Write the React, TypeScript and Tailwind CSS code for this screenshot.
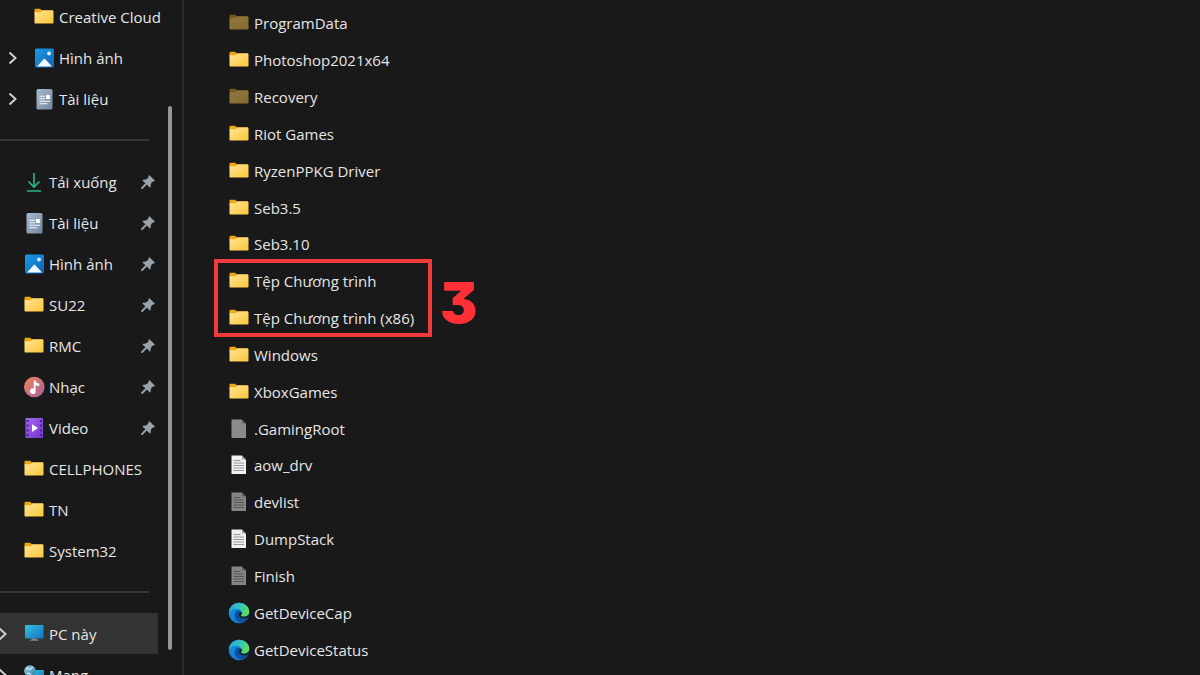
import type { ReactNode } from "react";
import clsx from "clsx";

type IconName =
  | "folder"
  | "hidden-folder"
  | "pictures"
  | "documents"
  | "downloads"
  | "music"
  | "video"
  | "pc"
  | "network"
  | "file"
  | "text"
  | "hidden-text"
  | "edge";

type Entry = { name: string; icon: IconName };
type NavEntry = Entry & { expandable?: boolean; pinned?: boolean; active?: boolean };

const CLOUD: NavEntry[] = [
  { name: "Creative Cloud", icon: "folder" },
  { name: "Hình ảnh", icon: "pictures", expandable: true },
  { name: "Tài liệu", icon: "documents", expandable: true },
];

const QUICK_ACCESS: NavEntry[] = [
  { name: "Tải xuống", icon: "downloads", pinned: true },
  { name: "Tài liệu", icon: "documents", pinned: true },
  { name: "Hình ảnh", icon: "pictures", pinned: true },
  { name: "SU22", icon: "folder", pinned: true },
  { name: "RMC", icon: "folder", pinned: true },
  { name: "Nhạc", icon: "music", pinned: true },
  { name: "Video", icon: "video", pinned: true },
  { name: "CELLPHONES", icon: "folder" },
  { name: "TN", icon: "folder" },
  { name: "System32", icon: "folder" },
];

const DEVICES: NavEntry[] = [
  { name: "PC này", icon: "pc", expandable: true, active: true },
  { name: "Mạng", icon: "network", expandable: true },
];

const BEFORE: Entry[] = [
  { name: "ProgramData", icon: "hidden-folder" },
  { name: "Photoshop2021x64", icon: "folder" },
  { name: "Recovery", icon: "hidden-folder" },
  { name: "Riot Games", icon: "folder" },
  { name: "RyzenPPKG Driver", icon: "folder" },
  { name: "Seb3.5", icon: "folder" },
  { name: "Seb3.10", icon: "folder" },
];

const MARKED: Entry[] = [
  { name: "Tệp Chương trình", icon: "folder" },
  { name: "Tệp Chương trình (x86)", icon: "folder" },
];

const AFTER: Entry[] = [
  { name: "Windows", icon: "folder" },
  { name: "XboxGames", icon: "folder" },
  { name: ".GamingRoot", icon: "file" },
  { name: "aow_drv", icon: "text" },
  { name: "devlist", icon: "hidden-text" },
  { name: "DumpStack", icon: "text" },
  { name: "Finish", icon: "hidden-text" },
  { name: "GetDeviceCap", icon: "edge" },
  { name: "GetDeviceStatus", icon: "edge" },
];

function Page({ fill, line }: { fill: string; line?: string }) {
  return (
    <>
      <path d="M2.500 .5h10.500l4 4v14.500H2.500z" fill={fill} />
      <path d="M13 .5v4h4z" fill="#1a1a1a" fillOpacity="0.35" />
      {line && (
        <path d="M4.500 5.500h7M4.500 8h10.500M4.500 10.500h10.500M4.500 13h10.500M4.500 15.500h10.500" stroke={line} strokeWidth="1" />
      )}
    </>
  );
}

function Folder({ tab, fill }: { tab: string; fill: string }) {
  return (
    <>
      <path d="M.5 3c0-.7.4-1.200 1.100-1.200h4.600l1.500 1.400H19v3H.5z" fill={tab} />
      <path
        d="M.5 5.200h6.200l1.600-1.700h10.400c.5 0 .8.3.8.8v11.200c0 .6-.4 1-1 1h-17c-.6 0-1-.4-1-1z"
        fill={fill}
      />
    </>
  );
}

const DRAWINGS: Record<IconName, ReactNode> = {
  folder: <Folder tab="#eaa716" fill="url(#folder)" />,
  "hidden-folder": <Folder tab="#7a5b1a" fill="url(#folder-dim)" />,
  pictures: (
    <>
      <rect x="1" y="0.5" width="19" height="19" rx="1.5" fill="url(#sky)" />
      <path d="M3 18.500l6.600-7.300c.5-.6 1.200-.6 1.700 0L18 18.500z" fill="#f4faff" />
      <circle cx="15" cy="5.500" r="1.900" fill="#d9f1ff" />
    </>
  ),
  documents: (
    <>
      <rect x="2.500" y="0" width="16" height="20.500" rx="1.500" fill="url(#paper)" />
      <path d="M5.500 7.200H11M5.500 9.700H11M5.500 12.200h10.500M5.500 14.700h8" stroke="#f3f7fb" strokeWidth="1.100" />
      <rect x="12" y="6" width="3.800" height="4" fill="#fff" />
    </>
  ),
  downloads: (
    <path d="M10 1v14M4.500 9.500L10 15l5.500-5.500M3 19h14" fill="none" stroke="#27b78c" strokeWidth="1.600" />
  ),
  music: (
    <>
      <circle cx="10.300" cy="10" r="10.300" fill="url(#music)" />
      <path d="M9.800 3.500h1.800c.2 2 1.600 2.800 3.600 3.300v2.400c-1.500-.1-2.600-.5-3.600-1.200v6.200a2.800 2.800 0 1 1-1.800-2.600z" fill="#fff" />
    </>
  ),
  video: (
    <>
      <rect x="1.500" y="0" width="17.500" height="20" rx="1.200" fill="url(#video)" />
      <path d="M3.600 2v17M16.900 2v17" stroke="#4b2391" strokeWidth="2" strokeDasharray="2.200 2.400" />
      <path d="M8 6.200l6 3.900-6 3.900z" fill="#fff" />
    </>
  ),
  pc: (
    <>
      <rect x="1" y="1" width="18.500" height="13.500" rx="1" fill="url(#screen)" />
      <path d="M8 14.500h4.500v1.100h2v1.200H6v-1.200h2z" fill="#7d8a94" />
    </>
  ),
  network: (
    <>
      <rect x="5" y="5" width="15" height="12" rx="1" fill="url(#screen)" />
      <circle cx="6" cy="6" r="5.800" fill="url(#globe)" />
      <path d="M2 3.500c2-.5 2.500 1.200 4 1s1.500-2.500 3-2M3 8.500c1.500-1 3.500 0 4 2" stroke="#d4eef8" strokeWidth="1.200" fill="none" />
    </>
  ),
  file: <Page fill="#8b8b8b" />,
  text: <Page fill="#f1f1f1" line="#999" />,
  "hidden-text": <Page fill="#858585" line="#565656" />,
  edge: (
    <>
      <circle cx="10" cy="10" r="10.300" fill="url(#edge-blue)" />
      <path
        d="M-.2 9C.6 3.600 5-.3 10-.3c5.800 0 10.300 4.300 10.300 8.800 0 3.400-2.600 5.300-5.400 5.300-1.800 0-3-.6-3-1.200 0-.5.900-.9.900-2.500 0-2.300-2.400-4.300-5.600-4.300C4 5.800 1.500 7.200-.2 9z"
        fill="url(#edge-green)"
      />
      <path
        d="M7.600 8.300c-1.700 1.300-2.200 3.300-1.700 5.400.7 3 3.600 5.400 7 5.800 2.700-1 4.500-2.300 5.900-4.400.3-.5-.1-.7-.5-.5-3.500 1.500-8.200.4-8.500-3-.1-1.400.6-2.400 1.800-3.100-1.300-1-2.900-.9-4-.2z"
        fill="#0d4f9e"
      />
      <path
        d="M12.900 10.100c0 1.600-.9 2-.9 2.500 0 .6 1.200 1.200 3 1.200 2 0 3.800-.9 4.700-2.500l.8 1.500-1.900 1.900c-3.500 1.900-8.500.6-8.800-3-.1-1.400.7-2.300 1.400-2.700.9-.4 1.700.2 1.700 1.100z"
        fill="#16202a"
      />
    </>
  ),
};

function Gradient({ id, from, to }: { id: string; from: string; to: string }) {
  return (
    <linearGradient id={id} x1="0" y1="0" x2="1" y2="1">
      <stop offset="0" stopColor={from} />
      <stop offset="1" stopColor={to} />
    </linearGradient>
  );
}

function Gradients() {
  return (
    <svg className="absolute h-0 w-0" aria-hidden="true">
      <defs>
        <Gradient id="folder" from="#ffe596" to="#fcc638" />
        <Gradient id="folder-dim" from="#8e7a45" to="#86692a" />
        <Gradient id="sky" from="#1d9ae6" to="#0c62b8" />
        <Gradient id="paper" from="#a9bccd" to="#71869f" />
        <Gradient id="music" from="#f0845a" to="#a8609f" />
        <Gradient id="video" from="#a566ee" to="#7438cf" />
        <Gradient id="screen" from="#35c3e4" to="#1272bd" />
        <Gradient id="globe" from="#9bd8ef" to="#24759c" />
        <Gradient id="edge-blue" from="#1597df" to="#0f6cc7" />
        <linearGradient id="edge-green" x1="0" y1="0.3" x2="1" y2="0.6">
          <stop offset="0" stopColor="#27a9e0" />
          <stop offset="0.55" stopColor="#35c8b4" />
          <stop offset="1" stopColor="#66df55" />
        </linearGradient>
      </defs>
    </svg>
  );
}

function Icon({ name }: { name: IconName }) {
  return (
    <svg viewBox="0 0 20 20" className="h-5 w-5 shrink-0 overflow-visible" aria-hidden="true">
      {DRAWINGS[name]}
    </svg>
  );
}

function Pin() {
  return (
    <svg viewBox="0 0 14 14" className="h-3.5 w-3.5 shrink-0" aria-hidden="true">
      <path
        d="M8.700.4l4.900 4.800c.4.4.2.9-.3 1L11 6.900 9.800 9.300l-.2 2.400c0 .7-.7.9-1.100.5L5.900 9.600 1.500 13.900H.2v-1.300l4.200-4.300L1.900 5.900c-.5-.5-.3-1.200.5-1.200l2.400-.3L7.100 3l.6-2.300c.1-.5.600-.7 1-.3z"
        fill="#98a2ab"
      />
    </svg>
  );
}

function NavRow({ entry, nested }: { entry: NavEntry; nested?: boolean }) {
  return (
    <li className={clsx("flex h-[41px] items-center", entry.active && "bg-[#333333]")}>
      <div className={clsx("flex h-full shrink-0 items-center", nested ? "w-[34px] pl-2" : "w-6")}>
        {entry.expandable && (
          <button aria-label={`Mở rộng ${entry.name}`} className={nested ? "" : "-ml-0.5"}>
            <svg viewBox="0 0 9 14" className="h-3.5 w-[9px]" aria-hidden="true">
              <path d="M1.500 1.500L7.500 7l-6 5.500" fill="none" stroke="#d0d0d0" strokeWidth="2" />
            </svg>
          </button>
        )}
      </div>
      <button className="flex h-full min-w-0 flex-1 items-center gap-[5px] text-left">
        <Icon name={entry.icon} />
        <span className="whitespace-nowrap">{entry.name}</span>
      </button>
      {entry.pinned && (
        <div className="pr-[3px]">
          <Pin />
        </div>
      )}
    </li>
  );
}

function Separator() {
  return (
    <div className="flex h-[42px] items-center pr-[9px]">
      <hr className="h-0.5 w-full border-0 bg-[#373737]" />
    </div>
  );
}

function Sidebar() {
  return (
    <aside className="flex w-[184px] shrink-0 border-r-2 border-[#2b2b2b]">
      <nav className="-mt-1 w-[158px] shrink-0">
        <ul>
          {CLOUD.map((entry) => (
            <NavRow key={entry.name} entry={entry} nested />
          ))}
        </ul>
        <Separator />
        <ul>
          {QUICK_ACCESS.map((entry) => (
            <NavRow key={entry.name} entry={entry} />
          ))}
        </ul>
        <Separator />
        <ul>
          {DEVICES.map((entry) => (
            <NavRow key={entry.name} entry={entry} />
          ))}
        </ul>
      </nav>
      <div className="ml-2.5 flex h-screen pt-[106px] pb-[25px]">
        <div className="w-1 rounded-full bg-[#979797]" />
      </div>
    </aside>
  );
}

function FileRow({ entry }: { entry: Entry }) {
  return (
    <li className="flex min-h-0 flex-1">
      <button className="flex flex-1 items-center gap-[5px] text-left">
        <Icon name={entry.icon} />
        <span className="whitespace-nowrap">{entry.name}</span>
      </button>
    </li>
  );
}

export default function App() {
  return (
    <div className="flex h-screen overflow-hidden bg-[#191919] font-['Open_Sans','Noto_Sans',sans-serif] text-[15px] leading-5 text-[#e6e6e6]">
      <Gradients />
      <Sidebar />
      <main className="flex min-w-0 flex-1 flex-col pt-[5px] pb-[7px] pl-[45px]">
        <ul className="flex flex-7 flex-col">
          {BEFORE.map((entry) => (
            <FileRow key={entry.name} entry={entry} />
          ))}
        </ul>
        <div className="relative flex flex-2 flex-col">
          <ul className="flex flex-1 flex-col">
            {MARKED.map((entry) => (
              <FileRow key={entry.name} entry={entry} />
            ))}
          </ul>
          <div className="pointer-events-none absolute -top-1 bottom-0 -left-[15px] flex items-end">
            <div className="h-full w-[218px] border-4 border-[#f23a3c]" />
            <strong className="ml-2 pb-1.5 font-['Inter',sans-serif] text-[56px] leading-none font-black text-[#ff3136] [font-feature-settings:'cv09']">
              3
            </strong>
          </div>
        </div>
        <ul className="flex flex-9 flex-col">
          {AFTER.map((entry) => (
            <FileRow key={entry.name} entry={entry} />
          ))}
        </ul>
      </main>
    </div>
  );
}
